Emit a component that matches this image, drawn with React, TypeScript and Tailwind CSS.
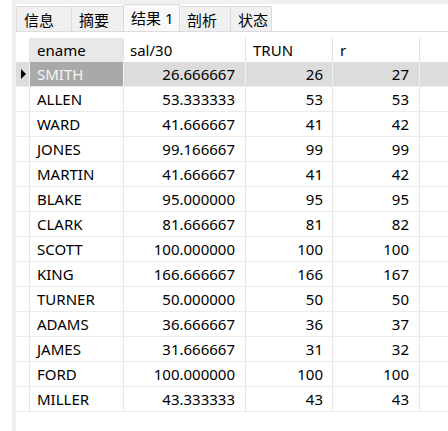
import React from "react";

const rows: [string, string, string, string][] = [
  ["SMITH", "26.666667", "26", "27"],
  ["ALLEN", "53.333333", "53", "53"],
  ["WARD", "41.666667", "41", "42"],
  ["JONES", "99.166667", "99", "99"],
  ["MARTIN", "41.666667", "41", "42"],
  ["BLAKE", "95.000000", "95", "95"],
  ["CLARK", "81.666667", "81", "82"],
  ["SCOTT", "100.000000", "100", "100"],
  ["KING", "166.666667", "166", "167"],
  ["TURNER", "50.000000", "50", "50"],
  ["ADAMS", "36.666667", "36", "37"],
  ["JAMES", "31.666667", "31", "32"],
  ["FORD", "100.000000", "100", "100"],
  ["MILLER", "43.333333", "43", "43"],
];

const tabs = [
  { label: "信息", w: "w-[56px]", active: false },
  { label: "摘要", w: "w-[53px]", active: false },
  { label: "结果 1", w: "w-[57px]", active: true },
  { label: "剖析", w: "w-[52px]", active: false },
  { label: "状态", w: "w-[42px]", active: false },
];

export default function App() {
  return (
    <div
      className="flex w-[448px] h-[431px] bg-white text-black overflow-hidden"
      style={{ fontFamily: "'Noto Sans', 'Noto Sans CJK SC', sans-serif" }}
    >
      <div className="w-[12px] shrink-0 bg-white" />
      <div className="flex-1 bg-[#f0f0f0] pl-[4px] pt-[4px]">
        <div className="h-full bg-white flex flex-col">
          {/* tab bar */}
          <div className="h-[28px] flex items-end border-b border-[#dcdcdc] shrink-0">
            {tabs.map((t) => (
              <div
                key={t.label}
                className={`${t.w} box-border border-t border-l border-r border-[#dadada] -mr-px flex items-start pl-[7px] text-[15px] leading-[20px] ${
                  t.active ? "h-[27px] bg-[#f9f9f9] pt-[3px]" : "h-[25px] bg-[#f0f0f0] pt-[3px]"
                }`}
              >
                {t.label}
              </div>
            ))}
          </div>
          {/* table */}
          <div className="mt-[6px] flex flex-col text-[15px] leading-[20px]">
            {/* header */}
            <div className="flex h-[24px]">
              <div className="w-[14px] shrink-0 border-r border-[#e2e2e2]" />
              <div className="w-[94px] shrink-0 border-r border-[#e2e2e2] bg-[#e8e8e8] flex items-center pl-[7px]">
                ename
              </div>
              <div className="w-[122px] shrink-0 border-r border-[#e2e2e2] flex items-center pl-[6px]">
                sal/30
              </div>
              <div className="w-[87px] shrink-0 border-r border-[#e2e2e2] flex items-center pl-[7px]">
                TRUN
              </div>
              <div className="w-[87px] shrink-0 border-r border-[#e2e2e2] flex items-center pl-[7px]">
                r
              </div>
            </div>
            {rows.map((r, i) => {
              const sel = i === 0;
              const line = sel ? "border-[#f2f2f2]" : "border-[#e6e6e6]";
              return (
                <div
                  key={r[0]}
                  className={`flex h-[25px] border-b border-[#ececec] ${sel ? "bg-[#dcdcdc]" : ""}`}
                >
                  <div className={`w-[14px] shrink-0 border-r ${line} flex items-center pl-[5px]`}>
                    {sel && (
                      <div className="w-0 h-0 border-y-[5px] border-y-transparent border-l-[5px] border-l-black" />
                    )}
                  </div>
                  <div
                    className={`w-[94px] shrink-0 border-r ${line} flex items-center pl-[7px] ${
                      sel ? "bg-[#a9a9a9] text-[#f4f4f4]" : ""
                    }`}
                  >
                    {r[0]}
                  </div>
                  <div className={`w-[122px] shrink-0 border-r ${line} flex items-center justify-end pr-[10px]`}>
                    {r[1]}
                  </div>
                  <div className={`w-[87px] shrink-0 border-r ${line} flex items-center justify-end pr-[9px]`}>
                    {r[2]}
                  </div>
                  <div className={`w-[87px] shrink-0 border-r ${line} flex items-center justify-end pr-[10px]`}>
                    {r[3]}
                  </div>
                </div>
              );
            })}
          </div>
        </div>
      </div>
    </div>
  );
}
